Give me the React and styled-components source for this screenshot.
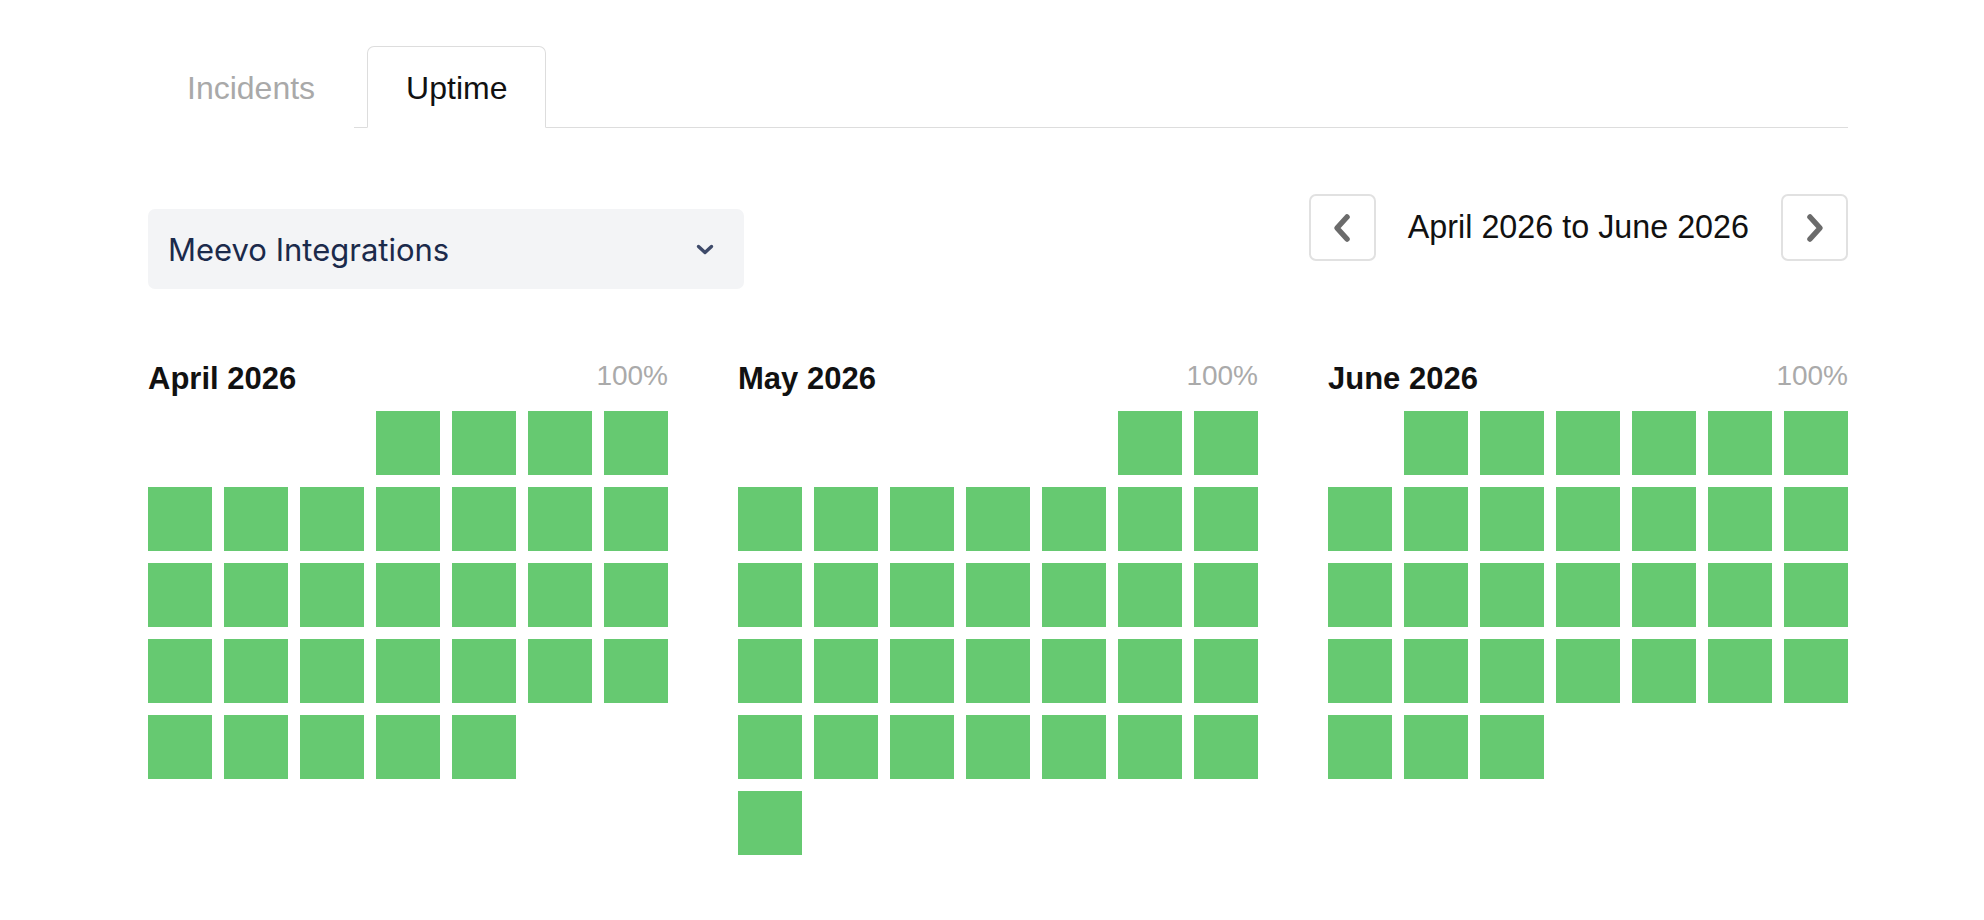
import React from 'react'
import styled, { createGlobalStyle } from 'styled-components'

const MONTHS = [
  { name: 'April 2026', offset: 3, days: 30, uptime: '100%' },
  { name: 'May 2026', offset: 5, days: 31, uptime: '100%' },
  { name: 'June 2026', offset: 1, days: 30, uptime: '100%' },
]

const GlobalStyle = createGlobalStyle`
  html, body {
    margin: 0;
    padding: 0;
    background: #ffffff;
  }
  body {
    font-family: "Liberation Sans", Arial, Helvetica, sans-serif;
    color: #111111;
  }
`

const Page = styled.div`
  width: 1700px;
  margin-left: 148px;
  padding-top: 46px;
`

const TabBar = styled.div`
  display: flex;
  border-bottom: 1px solid #dddddd;
`

const Tab = styled.div`
  box-sizing: border-box;
  height: 82px;
  margin-bottom: -1px;
  margin-right: 13px;
  padding: 2px 38px 0;
  display: flex;
  align-items: center;
  font-size: 32px;
  color: ${props => (props.active ? '#111111' : '#a9a9a9')};
  background: #ffffff;
  border: 1px solid ${props => (props.active ? '#dddddd' : 'transparent')};
  border-bottom-color: ${props => (props.active ? '#ffffff' : 'transparent')};
  border-radius: 7px 7px 0 0;
  cursor: pointer;
`

const Toolbar = styled.div`
  display: flex;
  justify-content: space-between;
  align-items: flex-start;
  margin-top: 66px;
`

const Select = styled.div`
  box-sizing: border-box;
  width: 596px;
  height: 80px;
  margin-top: 15px;
  padding: 0 30px 0 20px;
  display: flex;
  align-items: center;
  justify-content: space-between;
  background: #f3f4f6;
  border-radius: 7px;
  font-family: Inter, "Noto Sans", sans-serif;
  font-size: 31px;
  letter-spacing: 0;
  color: #1b2a4b;
`

const DateNav = styled.div`
  display: flex;
  align-items: center;
  gap: 32px;
`

const NavButton = styled.button`
  box-sizing: border-box;
  width: 67px;
  height: 67px;
  padding: 0;
  display: flex;
  align-items: center;
  justify-content: center;
  background: #ffffff;
  border: 2px solid #e1e1e1;
  border-radius: 7px;
  cursor: pointer;
`

const RangeLabel = styled.span`
  font-size: 32.3px;
  color: #111111;
`

const Months = styled.div`
  display: flex;
  gap: 70px;
  margin-top: 72px;
`

const Month = styled.div`
  width: 520px;
`

const MonthHeader = styled.div`
  display: flex;
  justify-content: space-between;
  align-items: center;
  height: 36px;
  margin-bottom: 14px;
`

const MonthTitle = styled.h3`
  margin: 0;
  font-size: 31px;
  font-weight: 700;
  color: #111111;
`

const Percent = styled.span`
  margin-bottom: 6px;
  font-size: 28px;
  color: #aaaaaa;
`

const DayGrid = styled.div`
  display: grid;
  grid-template-columns: repeat(7, 64px);
  grid-auto-rows: 64px;
  gap: 12px;
`

const Day = styled.div`
  background: #66c971;
  grid-column-start: ${props => props.start || 'auto'};
`

const Chevron = ({ dir }) => (
  <svg width="20" height="30" viewBox="0 0 20 30">
    <polyline
      points={dir === 'left' ? '15,4 5,15 15,26' : '5,4 15,15 5,26'}
      fill="none"
      stroke="#6b6b6b"
      strokeWidth="5.5"
      strokeLinecap="round"
      strokeLinejoin="round"
    />
  </svg>
)

function App() {
  return (
    <Page>
      <GlobalStyle />

      <TabBar>
        <Tab>Incidents</Tab>
        <Tab active>Uptime</Tab>
      </TabBar>

      <Toolbar>
        <Select>
          <span>Meevo Integrations</span>
          <svg width="18" height="11" viewBox="0 0 18 11">
            <polyline points="2.5,2.5 9,8.5 15.5,2.5" fill="none" stroke="#3e4a6a" strokeWidth="3.4" strokeLinecap="round" strokeLinejoin="round" />
          </svg>
        </Select>

        <DateNav>
          <NavButton aria-label="Previous">
            <Chevron dir="left" />
          </NavButton>
          <RangeLabel>April 2026 to June 2026</RangeLabel>
          <NavButton aria-label="Next">
            <Chevron dir="right" />
          </NavButton>
        </DateNav>
      </Toolbar>

      <Months>
        {MONTHS.map(month => (
          <Month key={month.name}>
            <MonthHeader>
              <MonthTitle>{month.name}</MonthTitle>
              <Percent>{month.uptime}</Percent>
            </MonthHeader>
            <DayGrid>
              {Array.from({ length: month.days }).map((_, index) => (
                <Day key={index} start={index === 0 ? month.offset + 1 : null} title={`Day ${index + 1}`} />
              ))}
            </DayGrid>
          </Month>
        ))}
      </Months>
    </Page>
  )
}

export default App
